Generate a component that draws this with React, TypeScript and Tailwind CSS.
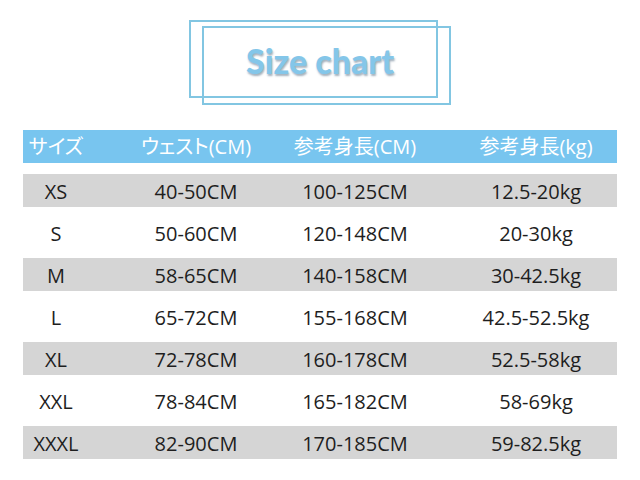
import React from 'react';

const cols = [
  'w-[66px] ml-0',
  'w-[134px] ml-[40px]',
  'w-[164px] ml-[10px]',
  'w-[162px] ml-[18px]',
];

const headers = ['サイズ', 'ウェスト(CM)', '参考身長(CM)', '参考身長(kg)'];

const rows = [
  ['XS', '40-50CM', '100-125CM', '12.5-20kg'],
  ['S', '50-60CM', '120-148CM', '20-30kg'],
  ['M', '58-65CM', '140-158CM', '30-42.5kg'],
  ['L', '65-72CM', '155-168CM', '42.5-52.5kg'],
  ['XL', '72-78CM', '160-178CM', '52.5-58kg'],
  ['XXL', '78-84CM', '165-182CM', '58-69kg'],
  ['XXXL', '82-90CM', '170-185CM', '59-82.5kg'],
];

function Row({ cells, className }: { cells: string[]; className: string }) {
  return (
    <div className={`flex h-[33px] items-center pt-[3px] ${className}`}>
      {cells.map((c, i) => (
        <div key={i} className={`flex shrink-0 justify-center whitespace-nowrap ${cols[i]}`}>
          {c}
        </div>
      ))}
    </div>
  );
}

export default function App() {
  return (
    <div className="w-[640px] h-[480px] overflow-hidden bg-white pt-[20px] font-['Open_Sans','Noto_Sans_CJK_JP',sans-serif]">
      {/* title with the two offset frames */}
      <div className="relative mx-auto h-[85px] w-[262px]">
        <div className="absolute left-0 top-0 h-[78px] w-[249px] border-2 border-[#82c6e2]"></div>
        <div className="absolute left-[13px] top-[6px] h-[79px] w-[249px] border-2 border-[#82c6e2]"></div>
        <div className="relative flex h-full items-center justify-center pb-[4px] font-['Lato',sans-serif] text-[34px] font-black text-[#84c6e9] [text-shadow:1px_2px_2px_rgba(55,85,110,0.45)]">
          Size chart
        </div>
      </div>

      <div className="ml-[23px] mt-[25px] w-[594px]">
        <div className="flex h-[33px] items-center bg-[#78c5ef] text-[20px] text-white [font-feature-settings:'palt']">
          {headers.map((h, i) => (
            <div key={i} className={`flex shrink-0 justify-center whitespace-nowrap ${cols[i]}`}>
              {h}
            </div>
          ))}
        </div>
        <div className="mt-[11px] flex flex-col gap-[9px] text-[20px] text-[#1e1e1e]">
          {rows.map((r, i) => (
            <Row key={i} cells={r} className={i % 2 === 0 ? 'bg-[#d5d5d5]' : 'bg-white'} />
          ))}
        </div>
      </div>
    </div>
  );
}
